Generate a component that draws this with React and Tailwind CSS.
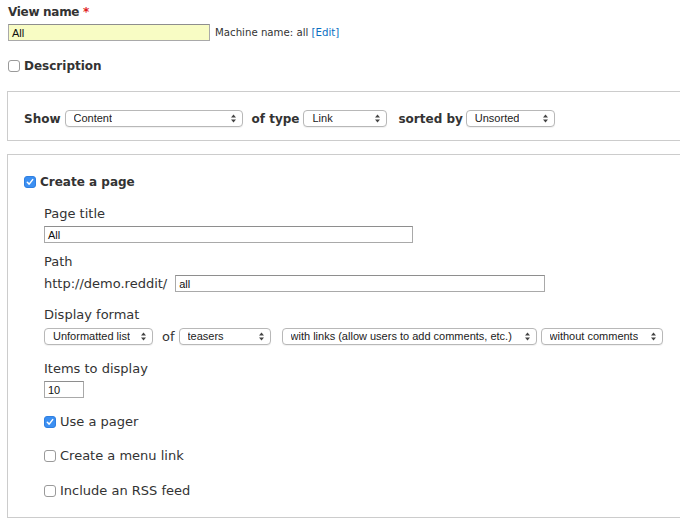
function Checkbox({ checked }) {
  if (checked) {
    return (
      <span className="inline-flex h-[12px] w-[12px] shrink-0 items-center justify-center rounded-[3px] border border-[#2f7fe0] bg-[#3b8ff2]">
        <svg width="8" height="8" viewBox="0 0 8 8">
          <path d="M1.3 4.3 L3.2 6.1 L6.7 1.6" fill="none" stroke="#fff" strokeWidth="1.5" strokeLinecap="round" strokeLinejoin="round" />
        </svg>
      </span>
    )
  }
  return <span className="inline-block h-[12px] w-[12px] shrink-0 rounded-[3px] border border-[#9a9a9a] bg-white" />
}

function Select({ value, w }) {
  return (
    <div
      className={`flex h-[17px] shrink-0 items-center justify-between rounded-[4px] border border-[#b8b8b8] bg-white pl-[8px] pr-[6px] shadow-[0_1px_1px_rgba(0,0,0,0.06)] ${w}`}
    >
      <span className="overflow-hidden whitespace-nowrap font-['Liberation_Sans',Arial,sans-serif] text-[11px] font-normal leading-none text-[#222]">
        {value}
      </span>
      <svg width="5" height="9" viewBox="0 0 5 9" className="ml-[4px] shrink-0">
        <path d="M0 3.5 L2.5 0.5 L5 3.5 Z" fill="#444" />
        <path d="M0 5.5 L2.5 8.5 L5 5.5 Z" fill="#444" />
      </svg>
    </div>
  )
}

function TextInput({ value, w, bg = 'bg-white' }) {
  return (
    <div
      className={`flex h-[17px] shrink-0 items-center border border-[#a9a9a9] border-t-[#8e8e8e] px-[3px] font-['Liberation_Sans',Arial,sans-serif] text-[11px] text-[#111] ${bg} ${w}`}
    >
      {value}
    </div>
  )
}

function CheckRow({ checked, label, className = '' }) {
  return (
    <div className={`flex h-[16px] items-center gap-[4px] ${className}`}>
      <Checkbox checked={checked} />
      <span>{label}</span>
    </div>
  )
}

export default function App() {
  return (
    <div className="h-[525px] w-[680px] overflow-hidden bg-white pl-[7px] pt-[4px] font-['DejaVu_Sans',Verdana,sans-serif] text-[13px] leading-[16px] text-[#333]">
      <div className="pl-[1px]">
        <div className="text-[12px] font-bold tracking-[-0.3px]">
          View name <span className="text-[#e0201b]">*</span>
        </div>
        <div className="mt-[4px] flex items-center">
          <TextInput value="All" w="w-[202px]" bg="bg-[#f8fcc4]" />
          <span className="ml-[5px] text-[10.2px]">
            Machine name: all <span className="text-[#0a6fc2]">[Edit]</span>
          </span>
        </div>
        <CheckRow className="mt-[17px] text-[12px] font-bold" checked={false} label="Description" />
      </div>

      {/* wizard: show */}
      <div className="mt-[17px] w-[700px] border border-[#cccccc] pb-[13px] pl-[16px] pt-[18px]">
        <div className="flex h-[17px] items-center text-[12px] font-bold">
          <span>Show</span>
          <div className="ml-[4px]">
            <Select value="Content" w="w-[178px]" />
          </div>
          <span className="ml-[9px]">of type</span>
          <div className="ml-[4px]">
            <Select value="Link" w="w-[84px]" />
          </div>
          <span className="ml-[11px]">sorted by</span>
          <div className="ml-[3px]">
            <Select value="Unsorted" w="w-[89px]" />
          </div>
        </div>
      </div>

      {/* wizard: page */}
      <div className="mt-[13px] w-[700px] border border-[#cccccc] pb-[18px] pl-[16px] pt-[19px]">
        <CheckRow className="text-[12px] font-bold" checked label="Create a page" />
        <div className="ml-[20px]">
          <div className="mt-[16px]">Page title</div>
          <div className="mt-[4px]">
            <TextInput value="All" w="w-[369px]" />
          </div>

          <div className="mt-[11px]">Path</div>
          <div className="mt-[5px] flex items-center">
            <span>http://demo.reddit/</span>
            <div className="ml-[8px]">
              <TextInput value="all" w="w-[370px]" />
            </div>
          </div>

          <div className="mt-[15px]">Display format</div>
          <div className="mt-[5px] flex items-center">
            <Select value="Unformatted list" w="w-[109px]" />
            <span className="ml-[9px]">of</span>
            <div className="ml-[4px]">
              <Select value="teasers" w="w-[92px]" />
            </div>
            <div className="ml-[11px]">
              <Select value="with links (allow users to add comments, etc.)" w="w-[255px]" />
            </div>
            <div className="ml-[4px]">
              <Select value="without comments" w="w-[122px]" />
            </div>
          </div>

          <div className="mt-[16px]">Items to display</div>
          <div className="mt-[4px]">
            <TextInput value="10" w="w-[40px]" />
          </div>

          <CheckRow className="mt-[16px]" checked label="Use a pager" />
          <CheckRow className="mt-[18px]" checked={false} label="Create a menu link" />
          <CheckRow className="mt-[19px]" checked={false} label="Include an RSS feed" />
        </div>
      </div>
    </div>
  )
}
